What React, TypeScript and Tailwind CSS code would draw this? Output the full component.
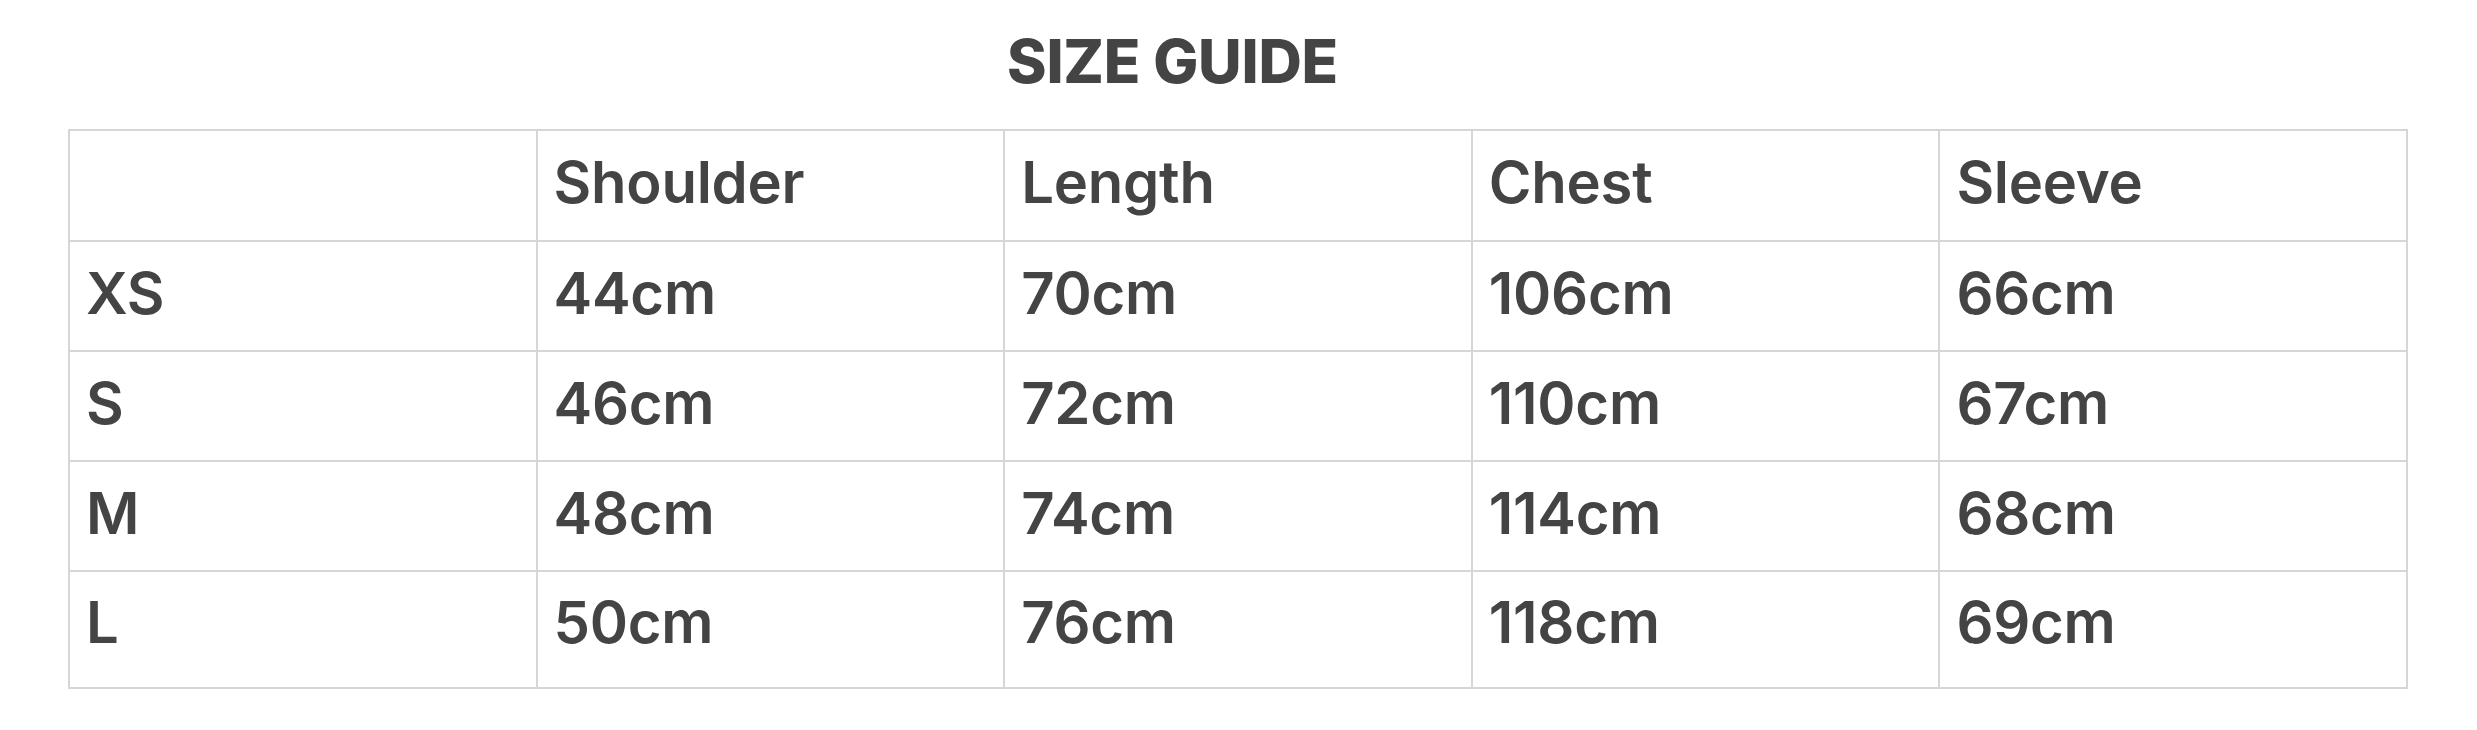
import React from 'react';

const headers = ['', 'Shoulder', 'Length', 'Chest', 'Sleeve'];

const rows: string[][] = [
    ['XS', '44cm', '70cm', '106cm', '66cm'],
    ['S', '46cm', '72cm', '110cm', '67cm'],
    ['M', '48cm', '74cm', '114cm', '68cm'],
    ['L', '50cm', '76cm', '118cm', '69cm'],
];

const cellFont = { fontFamily: 'Inter, "Liberation Sans", Arial, sans-serif' };

export default function App() {
    return (
        <div className="w-full h-[730px] bg-white text-[#444444] overflow-hidden" style={cellFont}>
            {/* Title */}
            <div className="flex justify-center pr-[132px] pt-[30px] h-[129px]">
                <h1 className="text-[60px] leading-[62px] font-extrabold tracking-[-0.2px]">SIZE GUIDE</h1>
            </div>

            {/* Size table */}
            <div className="pl-[68px]">
                <table className="w-[2340px] table-fixed border-collapse text-[58px] font-semibold tracking-[-0.25px]">
                    <thead>
                        <tr className="h-[111px]">
                            {headers.map((h, i) => (
                                <th key={i} className="border-2 border-[#d6d6d6] px-[16px] pb-[6px] text-left font-semibold align-middle">{h}</th>
                            ))}
                        </tr>
                    </thead>
                    <tbody>
                        {rows.map((r, ri) => (
                            <tr key={r[0]} className={ri === rows.length - 1 ? 'h-[117px]' : 'h-[110px]'}>
                                {r.map((c, ci) => (
                                    <td key={ci} className={`border-2 border-[#d6d6d6] px-[16px] align-middle ${ri === rows.length - 1 ? 'pb-[14px]' : 'pb-[6px]'}`}>{c}</td>
                                ))}
                            </tr>
                        ))}
                    </tbody>
                </table>
            </div>
        </div>
    );
}
